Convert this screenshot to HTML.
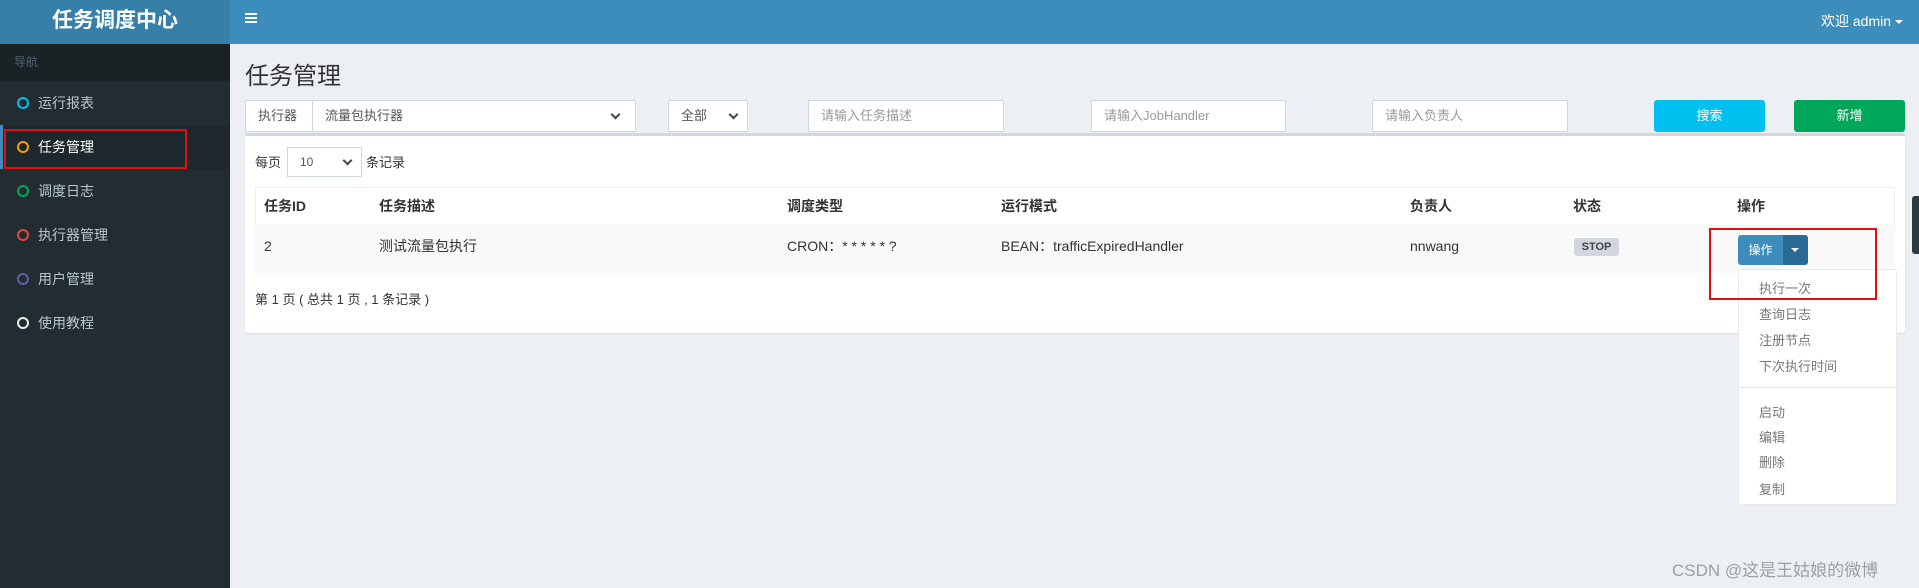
<!DOCTYPE html>
<html><head><meta charset="utf-8"><style>
*{box-sizing:border-box;margin:0;padding:0}
body{width:1919px;height:588px;overflow:hidden;background:#ecf0f5;font-family:"Liberation Sans","Noto Sans CJK SC",sans-serif;font-size:14px;color:#333;position:relative}
.abs{position:absolute}
.hdr{left:0;top:0;width:1919px;height:44px;background:#3c8dbc}
.logo{left:0;top:0;width:230px;height:44px;background:#367fa9;color:#fff;font-weight:bold;font-size:21px;text-align:center;line-height:42px}
.side{left:0;top:44px;width:230px;height:544px;background:#222d32}
.navh{left:0;top:44px;width:230px;height:37px;background:#1a2226;color:#4b646f;font-size:12px;line-height:37px;padding-left:14px}
.mi{left:0;width:230px;height:44px;color:#b8c7ce;line-height:44px;padding-left:38px;font-size:14px}
.mi i{position:absolute;left:17px;top:16px;width:12px;height:12px;border:2px solid;border-radius:50%}
.act{background:#1e282c;color:#fff;border-left:3px solid #3c8dbc}
.in{background:#fff;border:1px solid #d2d6de;height:32px;color:#999;line-height:30px;padding-left:12px;font-size:13px}
.btn{color:#fff;text-align:center;line-height:32px;height:32px;border-radius:3px;font-size:13px}
.th{font-weight:bold;top:187px;height:38px;line-height:38px}
.td{top:225px;line-height:42px}
.dd{color:#777;font-size:13px;left:1759px}
.chev{position:absolute;width:7px;height:7px;border-right:2px solid #444;border-bottom:2px solid #444;transform:rotate(45deg)}
</style></head><body>
<div class="abs hdr"></div>
<div class="abs logo">任务调度中心</div>
<div class="abs" style="left:245px;top:13px;width:12px;height:2px;background:#fff;box-shadow:0 4px 0 #fff,0 8px 0 #fff"></div>
<div class="abs" style="left:1821px;top:11px;color:#fff;font-size:14px">欢迎 admin <span style="display:inline-block;border:4px solid transparent;border-top-color:#fff;vertical-align:middle;margin-top:4px"></span></div>
<div class="abs side"></div>
<div class="abs navh">导航</div>
<div class="abs mi" style="top:81px"><i style="border-color:#00c0ef"></i>运行报表</div>
<div class="abs mi act" style="top:125px;padding-left:35px"><i style="border-color:#f39c12;left:14px"></i>任务管理</div>
<div class="abs mi" style="top:169px"><i style="border-color:#00a65a"></i>调度日志</div>
<div class="abs mi" style="top:213px"><i style="border-color:#dd4b39"></i>执行器管理</div>
<div class="abs mi" style="top:257px"><i style="border-color:#605ca8"></i>用户管理</div>
<div class="abs mi" style="top:301px"><i style="border-color:#eee"></i>使用教程</div>
<div class="abs" style="left:4px;top:129px;width:183px;height:40px;border:2px solid #dd1111"></div>

<div class="abs" style="left:245px;top:56px;font-size:24px;color:#333">任务管理</div>
<div class="abs in" style="left:245px;top:100px;width:68px;color:#555;background:#fff">执行器</div>
<div class="abs in" style="left:312px;top:100px;width:324px;color:#555">流量包执行器<span class="chev" style="right:16px;top:10px"></span></div>
<div class="abs in" style="left:668px;top:100px;width:80px;color:#555">全部<span class="chev" style="right:10px;top:10px"></span></div>
<div class="abs in" style="left:808px;top:100px;width:196px">请输入任务描述</div>
<div class="abs in" style="left:1091px;top:100px;width:195px">请输入JobHandler</div>
<div class="abs in" style="left:1372px;top:100px;width:196px">请输入负责人</div>
<div class="abs btn" style="left:1654px;top:100px;width:111px;background:#00c0ef">搜索</div>
<div class="abs btn" style="left:1794px;top:100px;width:111px;background:#00a65a">新增</div>

<div class="abs" style="left:245px;top:133px;width:1660px;height:200px;background:#fff;border-top:3px solid #d2d6de;border-radius:3px;box-shadow:0 1px 1px rgba(0,0,0,.1)"></div>
<div class="abs" style="left:255px;top:152px;font-size:13px">每页</div>
<div class="abs in" style="left:287px;top:147px;width:75px;height:30px;line-height:28px;color:#555;font-size:12px">10<span class="chev" style="right:10px;top:9px"></span></div>
<div class="abs" style="left:366px;top:152px;font-size:13px">条记录</div>
<div class="abs" style="left:255px;top:187px;width:1640px;height:86px;border:1px solid #f0f0f0"></div>
<div class="abs" style="left:255px;top:225px;width:1640px;height:48px;background:#f9f9f9"></div>
<div class="th abs" style="left:264px">任务ID</div>
<div class="th abs" style="left:379px">任务描述</div>
<div class="th abs" style="left:787px">调度类型</div>
<div class="th abs" style="left:1001px">运行模式</div>
<div class="th abs" style="left:1410px">负责人</div>
<div class="th abs" style="left:1573px">状态</div>
<div class="th abs" style="left:1737px">操作</div>
<div class="td abs" style="left:264px">2</div>
<div class="td abs" style="left:379px">测试流量包执行</div>
<div class="td abs" style="left:787px">CRON：* * * * * ?</div>
<div class="td abs" style="left:1001px">BEAN：trafficExpiredHandler</div>
<div class="td abs" style="left:1410px">nnwang</div>
<div class="abs" style="left:1574px;top:238px;width:45px;height:18px;background:#d2d6de;border-radius:3px;font-size:11px;font-weight:bold;text-align:center;line-height:18px;color:#444">STOP</div>
<div class="abs" style="left:1738px;top:235px;width:45px;height:30px;background:#3c8dbc;color:#fff;font-size:12px;line-height:30px;text-align:center;border-radius:3px 0 0 3px">操作</div>
<div class="abs" style="left:1783px;top:235px;width:25px;height:30px;background:#2a6a97;border-radius:0 3px 3px 0"><span style="position:absolute;left:8px;top:13px;border:4px solid transparent;border-top-color:#fff"></span></div>
<div class="abs" style="left:255px;top:289px;font-size:13px">第 1 页 ( 总共 1 页 , 1 条记录 )</div>

<div class="abs" style="left:1738px;top:269px;width:159px;height:236px;background:#fff;border:1px solid #e8e8e8;border-radius:3px"></div>
<div class="abs" style="left:1738px;top:387px;width:159px;height:1px;background:#e5e5e5"></div>
<div class="abs dd" style="top:278px">执行一次</div>
<div class="abs dd" style="top:304px">查询日志</div>
<div class="abs dd" style="top:330px">注册节点</div>
<div class="abs dd" style="top:356px">下次执行时间</div>
<div class="abs dd" style="top:402px">启动</div>
<div class="abs dd" style="top:427px">编辑</div>
<div class="abs dd" style="top:452px">删除</div>
<div class="abs dd" style="top:479px">复制</div>
<div class="abs" style="left:1709px;top:228px;width:168px;height:72px;border:2px solid #dd1111"></div>
<div class="abs" style="left:1912px;top:196px;width:7px;height:58px;background:#2d3a40;border-radius:3px 0 0 3px"></div>
<div class="abs" style="left:1672px;top:556px;font-size:17px;color:#9aa0a6">CSDN @这是王姑娘的微博</div>
</body></html>
